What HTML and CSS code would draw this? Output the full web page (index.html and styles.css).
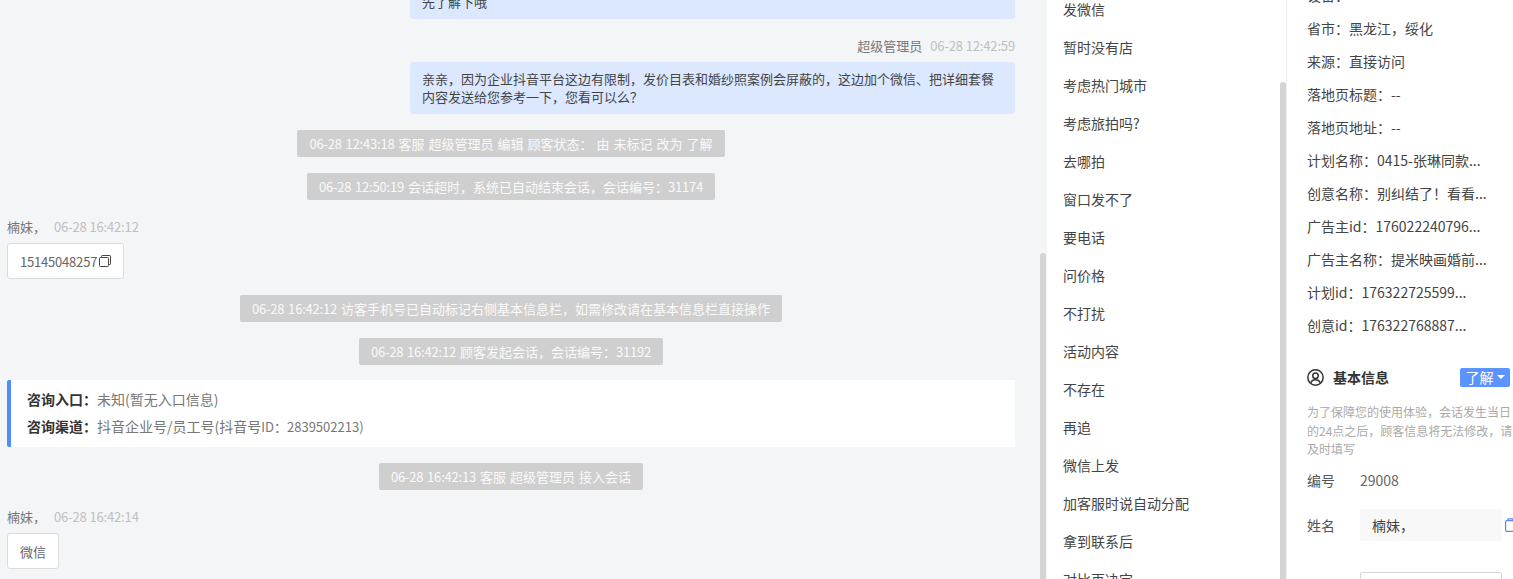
FILE: index.html
```html
<!DOCTYPE html>
<html lang="zh-CN">
<head>
<meta charset="utf-8">
<title>会话</title>
<link rel="stylesheet" href="styles.css">
</head>
<body>
<div class="app">
  <section class="chat">
    <div class="chat-flow">
      <div class="bubble first">先了解下哦</div>
      <div class="meta right"><span class="who">超级管理员</span><span class="time">06-28 12:42:59</span></div>
      <div class="bubble">亲亲，因为企业抖音平台这边有限制，发价目表和婚纱照案例会屏蔽的，这边加个微信、把详细套餐内容发送给您参考一下，您看可以么？</div>
      <div class="pill"><span class="num">06-28 12:43:18</span> 客服 超级管理员 编辑 顾客状态： 由 未标记 改为 了解</div>
      <div class="pill"><span class="num">06-28 12:50:19</span> 会话超时，系统已自动结束会话，会话编号：<span class="num">31174</span></div>
      <div class="meta"><span class="who">楠妹，</span><span class="time">06-28 16:42:12</span></div>
      <div class="box"><span class="num">15145048257</span><svg class="copy" viewBox="0 0 12 12" width="12" height="12" fill="none" stroke="#444" stroke-width="1"><rect x="0.5" y="2.5" width="9" height="9" rx="1"/><path d="M2.5 2.5V1.2q0-.7.7-.7h7.6q.7 0 .7.7v7.6q0 .7-.7.7H9.5"/></svg></div>
      <div class="pill"><span class="num">06-28 16:42:12</span> 访客手机号已自动标记右侧基本信息栏，如需修改请在基本信息栏直接操作</div>
      <div class="pill"><span class="num">06-28 16:42:12</span> 顾客发起会话，会话编号：<span class="num">31192</span></div>
      <div class="card">
        <div class="card-row"><b>咨询入口：</b><span>未知(暂无入口信息)</span></div>
        <div class="card-row"><b>咨询渠道：</b><span>抖音企业号/员工号(抖音号<span class="small">ID：2839502213)</span></span></div>
      </div>
      <div class="pill"><span class="num">06-28 16:42:13</span> 客服 超级管理员 接入会话</div>
      <div class="meta"><span class="who">楠妹，</span><span class="time">06-28 16:42:14</span></div>
      <div class="box">微信</div>
    </div>
    <div class="thumb chat-thumb"></div>
  </section>

  <section class="tags">
    <ul class="tag-list">
      <li>发微信</li><li>暂时没有店</li><li>考虑热门城市</li><li>考虑旅拍吗?</li>
      <li>去哪拍</li><li>窗口发不了</li><li>要电话</li><li>问价格</li>
      <li>不打扰</li><li>活动内容</li><li>不存在</li><li>再追</li>
      <li>微信上发</li><li>加客服时说自动分配</li><li>拿到联系后</li><li>对比再决定</li>
    </ul>
    <div class="thumb tag-thumb"></div>
  </section>

  <aside class="info">
    <ul class="facts">
      <li>设备：</li>
      <li>省市：黑龙江，绥化</li>
      <li>来源：直接访问</li>
      <li>落地页标题：--</li>
      <li>落地页地址：--</li>
      <li>计划名称：0415-张琳同款...</li>
      <li>创意名称：别纠结了！看看...</li>
      <li>广告主id：176022240796...</li>
      <li>广告主名称：提米映画婚前...</li>
      <li>计划id：176322725599...</li>
      <li>创意id：176322768887...</li>
    </ul>
    <div class="head">
      <svg class="user" viewBox="0 0 16 16" width="17" height="17" fill="none" stroke="#333" stroke-width="1.4"><circle cx="8" cy="8" r="7.2"/><circle cx="8" cy="6.4" r="2.6"/><path d="M3.6 13q1-2.8 4.4-2.8t4.4 2.8"/></svg>
      <h2>基本信息</h2>
      <span class="status">了解<i class="caret"></i></span>
    </div>
    <p class="note">为了保障您的使用体验，会话发生当日的24点之后，顾客信息将无法修改，请及时填写</p>
    <div class="field plain"><label>编号</label><span>29008</span></div>
    <div class="field name"><label>姓名</label><div class="input filled">楠妹，</div>
      <svg class="copy-blue" viewBox="0 0 12 14" width="12" height="14" fill="none" stroke="#4c8dff" stroke-width="1.2"><rect x="0.6" y="2.6" width="10" height="10.8" rx="1"/><path d="M3 2.6V.8h5v1.8"/></svg>
    </div>
    <div class="field next"><div class="input"></div></div>
  </aside>
</div>
</body>
</html>
```
FILE: styles.css
```css
* { box-sizing: border-box; }
html, body { margin: 0; height: 100%; overflow: hidden; }
body {
  font-family: "Noto Sans CJK SC", "Open Sans", sans-serif;
  font-size: 13px;
  color: #444;
  background: #fff;
}
.app { display: flex; height: 579px; overflow: hidden; }

/* chat */
.chat { position: relative; width: 1047px; flex: none; background: #f4f5f7; overflow: hidden; }
.chat-flow { display: flex; flex-direction: column; align-items: flex-start; padding: 0 32px 0 7px; margin-top: -15px; }
.bubble {
  align-self: flex-end; width: 605px; padding: 8px 12px; line-height: 18px;
  background: #dbe8ff; border-radius: 4px; color: #444; margin-bottom: 16px;
}
.bubble.first { margin-bottom: 18px; }
.meta { display: flex; gap: 8px; line-height: 18px; height: 18px; margin: 2px 0 7px; color: #777; }
.meta.right { align-self: flex-end; margin-top: 0; }
.time { color: #c0c0c0; letter-spacing: -0.15px; }
.num { letter-spacing: -0.2px; }
.pill {
  align-self: center; height: 27px; line-height: 27px; padding: 0 12px; word-spacing: 1.1px;
  background: #cfcfcf; color: #fafafa; border-radius: 2px; margin-bottom: 16px; white-space: nowrap;
}
.box {
  display: flex; align-items: center; height: 36px; padding: 0 12px; margin-bottom: 16px;
  background: #fff; border: 1px solid #dcdcdc; border-radius: 3px; color: #666;
}
.copy { margin-left: 2px; }
.card {
  align-self: stretch; height: 67px; padding: 6px 16px 7px; margin: -1px 0 16px;
  background: #fff; border-left: 4px solid #4c8dff; border-radius: 2px 0 0 2px;
  font-size: 14px;
}
.card-row { display: flex; line-height: 27px; color: #777; }
.card-row b { font-weight: 700; color: #333; }
.small { font-size: 13px; }

/* scroll thumbs */
.thumb { position: absolute; right: 1px; bottom: 0; width: 6px; background: #d4d4d4; border-radius: 3px 3px 0 0; }
.chat-thumb { top: 253px; }
.tag-thumb { top: 82px; right: 0; }

/* middle list */
.tags { position: relative; width: 240px; flex: none; overflow: hidden; border-right: 1px solid #eee; font-size: 14px; }
.tag-list { list-style: none; margin: -10px 0 0; padding: 0 0 0 16px; }
.tag-list li { height: 38px; line-height: 38px; color: #444; white-space: nowrap; }

/* right panel */
.info { flex: 1; min-width: 0; padding-left: 20px; overflow: hidden; font-size: 14px; }
.facts { list-style: none; margin: -21px 0 0; padding: 0; }
.facts li { height: 33px; line-height: 33px; color: #444; white-space: nowrap; }
.head { display: flex; align-items: center; height: 20px; margin-top: 25px; padding-right: 3px; }
.user { margin-right: 9px; flex: none; }
.head h2 { margin: 0; font-size: 14px; font-weight: 700; color: #333; flex: 1; }
.status {
  display: flex; align-items: center; justify-content: center; gap: 3px; width: 50px; height: 19px;
  background: #5b93ff; color: #fff; border-radius: 2px;
}
.caret { width: 0; height: 0; border: 4px solid transparent; border-top-color: #fff; border-bottom: 0; }
.note { margin: 16px 0 0; width: 206px; font-size: 12px; line-height: 18.5px; color: #aaa; }
.field { display: flex; align-items: center; white-space: nowrap; }
.field label { width: 53px; flex: none; color: #555; }
.plain { height: 20px; margin-top: 11px; }
.plain span { color: #666; }
.name { margin-top: 19px; }
.input { width: 142px; height: 32px; line-height: 32px; padding: 0 12px; border-radius: 2px; flex: none; }
.filled { background: #f8f8f8; color: #444; }
.copy-blue { margin-left: 3px; flex: none; }
.next { margin-top: 31px; padding-left: 53px; }
.next .input { background: #fff; border: 1px solid #d6d6d6; }
```
